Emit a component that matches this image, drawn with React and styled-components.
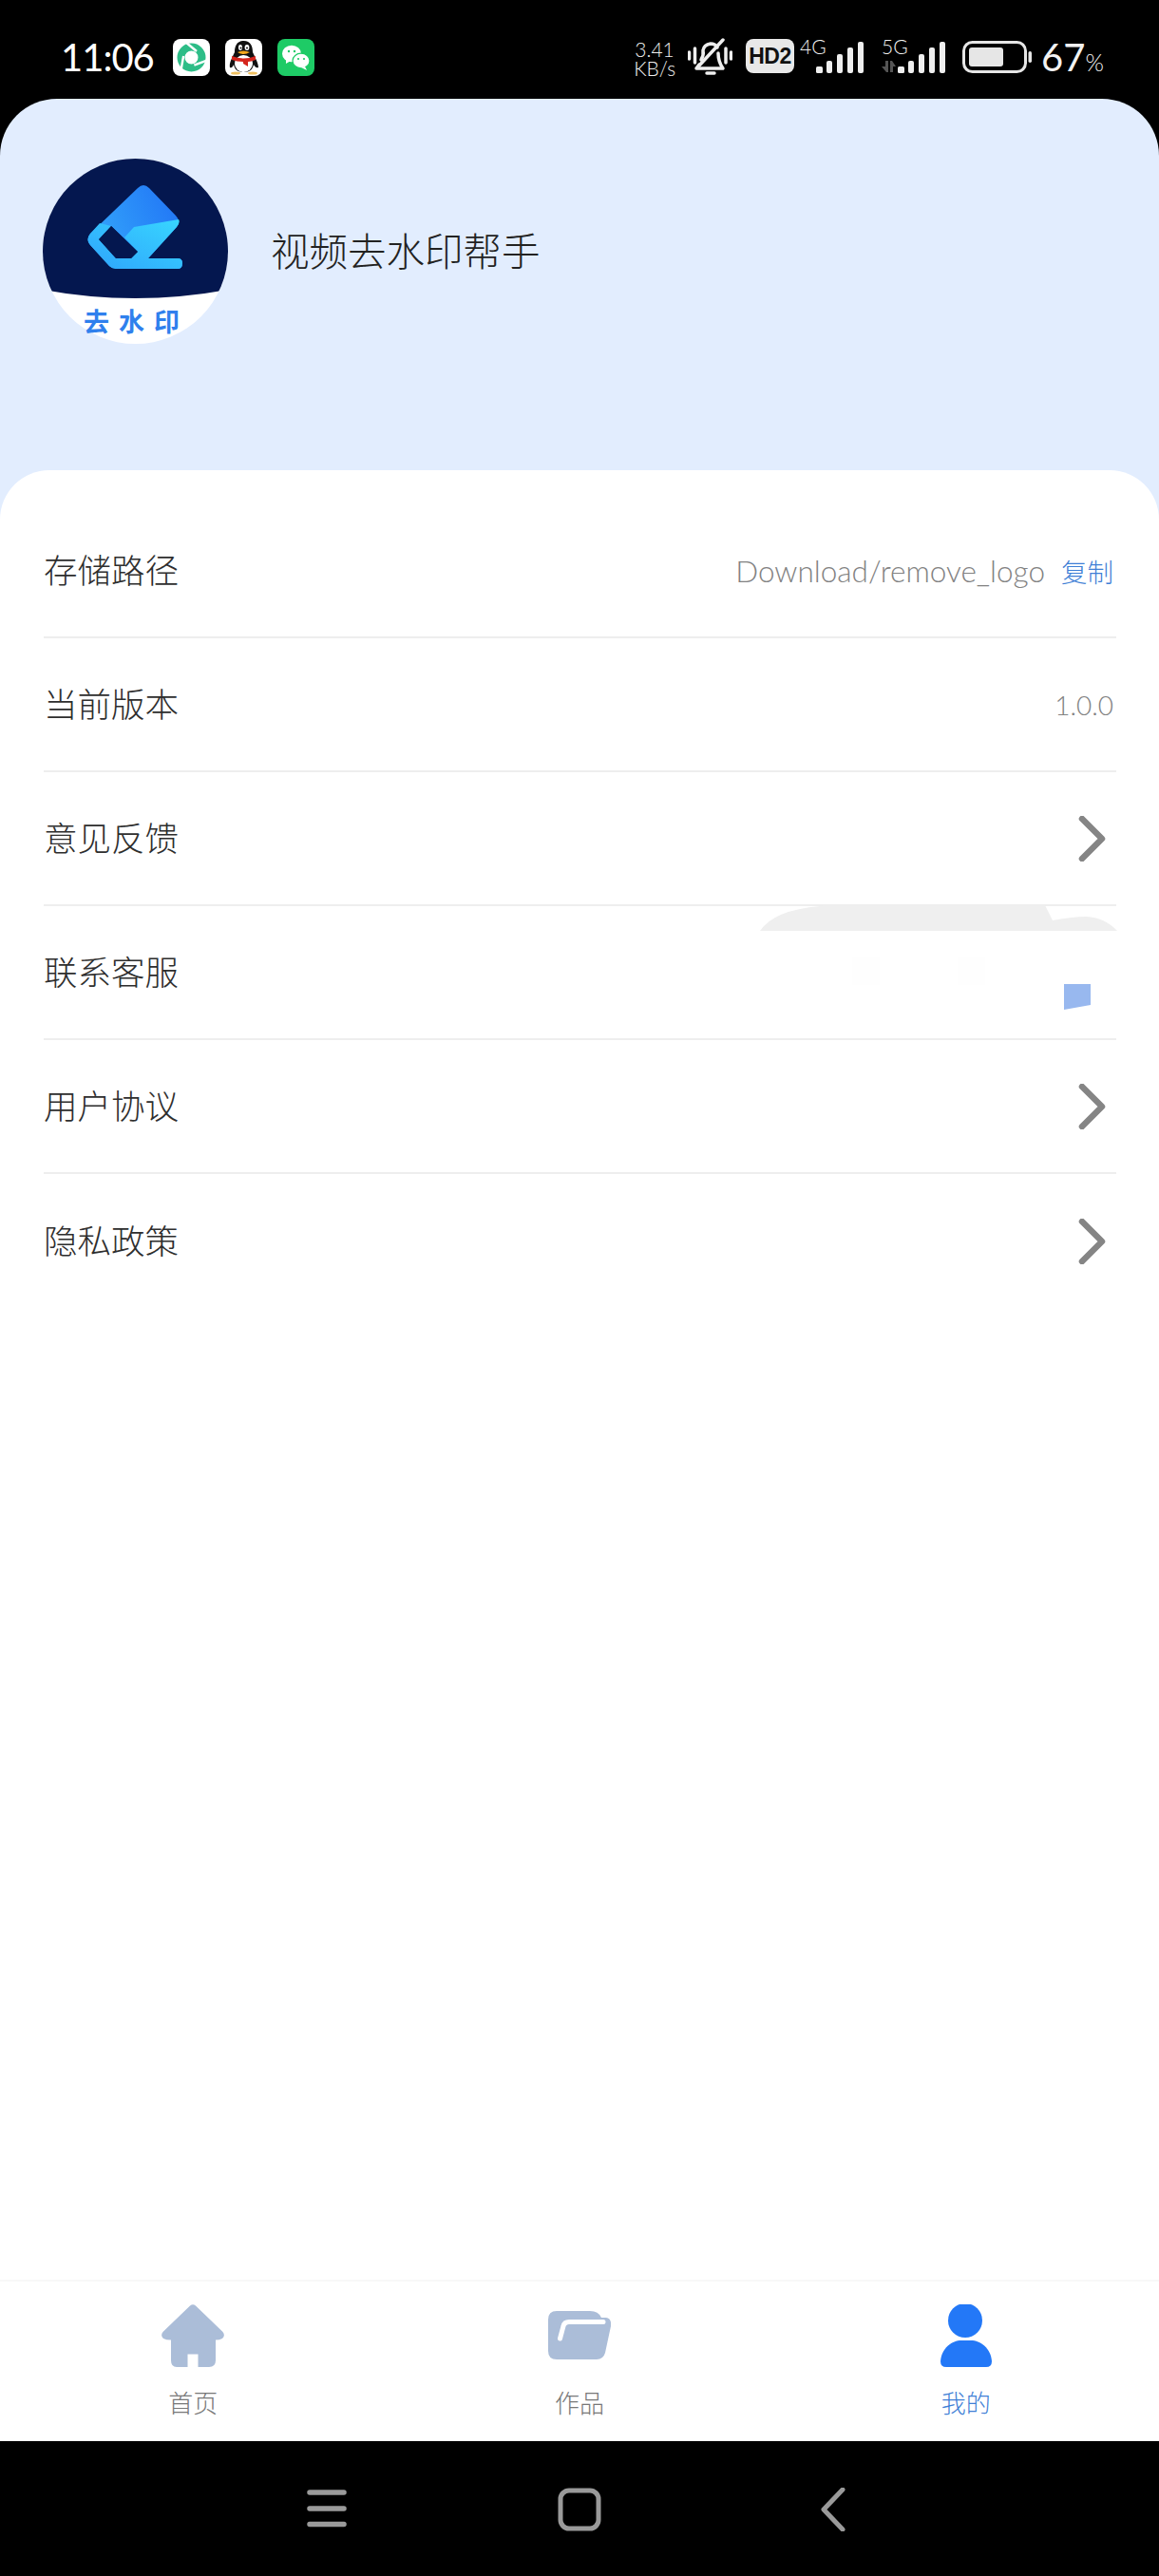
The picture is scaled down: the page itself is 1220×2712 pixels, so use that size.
import React from 'react'
import styled, { createGlobalStyle } from 'styled-components'

const GlobalStyle = createGlobalStyle`
  html, body {
    margin: 0;
    padding: 0;
    background: #000;
  }
  * {
    box-sizing: border-box;
  }
`

const CJK = `"Noto Sans CJK SC", "Noto Sans", sans-serif`
const LATIN = `Lato, "Noto Sans CJK SC", sans-serif`

const Page = styled.div`
  width: 1220px;
  height: 2712px;
  display: flex;
  flex-direction: column;
  background: #000;
  font-family: ${CJK};
  overflow: hidden;
`

const StatusBar = styled.div`
  height: 104px;
  flex: none;
  display: flex;
  justify-content: space-between;
  align-items: flex-start;
  padding: 40px 58px 0 64px;
  color: #f2f2f2;
`

const StatusLeft = styled.div`
  display: flex;
  align-items: center;
  height: 40px;
`

const StatusRight = styled.div`
  display: flex;
  align-items: flex-start;
  height: 40px;
`

const Time = styled.span`
  font-family: ${LATIN};
  font-weight: 400;
  font-size: 40px;
  line-height: 40px;
  letter-spacing: -1px;
  width: 118px;
  color: #fff;
`

const AppIcon = styled.svg`
  width: 39px;
  height: 39px;
  margin-right: 16px;
  flex: none;
`

const Speed = styled.div`
  font-family: ${LATIN};
  font-weight: 300;
  font-size: 21px;
  line-height: 20px;
  width: 44px;
  margin-top: 2px;
  text-align: center;
  color: #f0f0f0;
`

const StatusIcon = styled.svg`
  flex: none;
  display: block;
  margin-left: ${p => p.$gap}px;
`

const SignalIcon = styled(StatusIcon)`
  margin-top: -6px;
`

const Percent = styled.div`
  font-family: ${LATIN};
  font-weight: 400;
  font-size: 40px;
  line-height: 40px;
  margin-left: 10px;
  color: #f2f2f2;
  small {
    font-size: 25px;
    font-weight: 300;
  }
`

const Body = styled.div`
  flex: 1;
  display: flex;
  flex-direction: column;
  background: #e2edfe;
  border-radius: 60px 60px 0 0;
`

const Hero = styled.div`
  height: 391px;
  flex: none;
  display: flex;
  align-items: flex-start;
  padding: 63px 0 0 45px;
`

const Avatar = styled.svg`
  width: 195px;
  height: 195px;
  flex: none;
`

const AppName = styled.div`
  margin-left: 45px;
  height: 195px;
  padding-bottom: 4px;
  display: flex;
  align-items: center;
  font-size: 40.5px;
  font-weight: 300;
  color: #222;
`

const Sheet = styled.div`
  flex: 1;
  background: #fff;
  border-radius: 52px 52px 0 0;
  padding: 36px 45px 0 46px;
`

const Row = styled.div`
  position: relative;
  height: 141px;
  display: flex;
  align-items: center;
  justify-content: space-between;
  border-bottom: ${p => (p.$last ? 'none' : '2px solid #eeeeee')};
`

const Label = styled.span`
  margin-bottom: 4px;
  font-size: 35.5px;
  font-weight: 300;
  color: #2e2e2e;
`

const RowRight = styled.div`
  display: flex;
  align-items: center;
  padding-right: 3px;
`

const Value = styled.span`
  font-family: ${LATIN};
  font-weight: 300;
  font-size: ${p => p.$size}px;
  color: #828282;
`

const Copy = styled.span`
  margin-left: 17px;
  font-size: 27.5px;
  font-weight: 300;
  color: #3f7fd6;
`

const Chevron = styled.svg`
  width: 30px;
  height: 48px;
  margin-right: 8px;
  flex: none;
`

const Glitch = styled.svg`
  position: absolute;
  left: 0;
  top: -2px;
  width: 1130px;
  height: 142px;
`

const TabBar = styled.div`
  height: 170px;
  flex: none;
  display: grid;
  grid-template-columns: repeat(3, 1fr);
  background: #fff;
  border-top: 2px solid #f8f8f8;
`

const Tab = styled.div`
  display: flex;
  flex-direction: column;
  align-items: center;
  padding-top: 24px;
`

const TabIcon = styled.svg`
  width: 66px;
  height: 66px;
  display: block;
`

const TabLabel = styled.span`
  margin-top: 22px;
  font-size: 26px;
  line-height: 30px;
  font-weight: 300;
  color: ${p => (p.$active ? '#3f7fd6' : '#787878')};
`

const NavBar = styled.div`
  height: 142px;
  flex: none;
  display: grid;
  grid-template-columns: repeat(3, 1fr);
  background: #000;
`

const NavSlot = styled.div`
  display: flex;
  align-items: flex-start;
  padding-top: 49px;
  justify-content: ${p => p.$align};
  padding-left: ${p => p.$left || 0}px;
`

const NavIcon = styled.svg`
  width: 46px;
  height: 46px;
  display: block;
`

const rows = [
  { label: '存储路径', value: 'Download/remove_logo', size: 31.5, copy: true },
  { label: '当前版本', value: '1.0.0', size: 28 },
  { label: '意见反馈', arrow: true },
  { label: '联系客服', glitch: true },
  { label: '用户协议', arrow: true },
  { label: '隐私政策', arrow: true, last: true },
]

const SwirlApp = () => (
  <AppIcon viewBox="0 0 39 39">
    <rect width="39" height="39" rx="8" fill="#fff" />
    <circle cx="19.5" cy="19.5" r="11" fill="none" stroke="#2dbd87" strokeWidth="8" />
    <g fill="none" stroke="#fff" strokeWidth="2.4">
      <path d="M13 3 L25 13" />
      <path d="M13 3 L25 13" transform="rotate(120 19.5 19.5)" />
      <path d="M13 3 L25 13" transform="rotate(240 19.5 19.5)" />
    </g>
  </AppIcon>
)

const QQApp = () => (
  <AppIcon viewBox="0 0 39 39">
    <rect width="39" height="39" rx="8" fill="#fff" />
    <ellipse cx="29" cy="36" rx="5" ry="1.6" fill="#f0c060" />
    <ellipse cx="11" cy="36" rx="5" ry="1.6" fill="#f0c060" />
    <path d="M19.5 2 C12 2 10 8 10 14 C7 20 4 26 5 30 C7 31 8 29 9 27 C10 32 13 35 19.5 35 C26 35 29 32 30 27 C31 29 33 31 35 30 C35 26 32 20 29 14 C29 8 27 2 19.5 2Z" fill="#111" />
    <ellipse cx="19.5" cy="26" rx="9.5" ry="9" fill="#fff" />
    <ellipse cx="16" cy="9" rx="2" ry="3" fill="#fff" />
    <ellipse cx="23" cy="9" rx="2.4" ry="3" fill="#fff" />
    <circle cx="16.5" cy="9.5" r="1" fill="#111" />
    <circle cx="23" cy="9.5" r="1" fill="#111" />
    <path d="M13 14 Q19.5 11 26 14 Q19.5 18 13 14Z" fill="#f4a81c" />
    <path d="M7 18 Q19 23 32 18 L32 22 Q27 24 24 24 L24 29 L19 26 L19 24 Q12 24 7 22Z" fill="#d5251d" />
  </AppIcon>
)

const WechatApp = () => (
  <AppIcon viewBox="0 0 39 39">
    <rect width="39" height="39" rx="8" fill="#1ecb66" />
    <ellipse cx="15" cy="15.5" rx="10" ry="8.8" fill="#fff" />
    <path d="M9 21 L9 26 L14 23Z" fill="#fff" />
    <ellipse cx="25" cy="23" rx="9" ry="7.8" fill="#fff" stroke="#1ecb66" strokeWidth="1.2" />
    <path d="M29 29 L31 33 L25 30Z" fill="#fff" />
    <circle cx="12" cy="13" r="1.2" fill="#1ecb66" />
    <circle cx="18" cy="13" r="1.2" fill="#1ecb66" />
    <circle cx="22" cy="21" r="1.1" fill="#1ecb66" />
    <circle cx="28" cy="21" r="1.1" fill="#1ecb66" />
  </AppIcon>
)

const Signal = ({ label, arrows, gap }) => (
  <SignalIcon $gap={gap} width="72" height="46" viewBox="0 -6 72 46">
    <text x="0" y="17" fontFamily="Lato, sans-serif" fontWeight="300" fontSize="21" fill="#f0f0f0">{label}</text>
    {arrows && (
      <g fill="#555">
        <path d="M0 30 H4 V24 H7 V36 H5 Z" />
        <path d="M9 24 H11 L15 30 H12 V36 H9 Z" />
      </g>
    )}
    <g fill="#eeeeee">
      <rect x="17" y="30" width="7" height="7" rx="1.5" />
      <rect x="28" y="24" width="6" height="13" rx="2" />
      <rect x="39" y="17" width="6" height="20" rx="2" />
      <rect x="50" y="10" width="6" height="27" rx="2" />
      <rect x="61" y="4" width="6" height="33" rx="2" />
    </g>
  </SignalIcon>
)

const Logo = () => (
  <Avatar viewBox="0 0 195 195">
    <defs>
      <clipPath id="logoClip">
        <circle cx="97.5" cy="97.5" r="97.5" />
      </clipPath>
      <linearGradient id="eraserTop" x1="1" y1="0.35" x2="0" y2="0.75">
        <stop offset="0" stopColor="#2277f6" />
        <stop offset="1" stopColor="#35a9fb" />
      </linearGradient>
      <linearGradient id="eraserBottom" x1="1" y1="0" x2="0" y2="1">
        <stop offset="0" stopColor="#38d6ff" />
        <stop offset="1" stopColor="#2fa4fc" />
      </linearGradient>
    </defs>
    <g clipPath="url(#logoClip)">
      <rect width="195" height="195" fill="#fff" />
      <path d="M0 0 H195 V138 Q97 156 0 138Z" fill="#04174f" />
    </g>
    <path
      d="M100 31 Q106 25 112 31 L140 60 Q146 66 141 72 L111 105 H142 Q147 105 147 110 Q147 116 142 116 H77 Q73 116 70 113 L50 91 Q45 85 50 79Z M72 71 L59 85 L77 105 H93 L100 98Z"
      fill="url(#eraserTop)"
      fillRule="evenodd"
    />
    <path
      d="M96 72 L143 64 Q145 67 141 72 L111 105 H142 Q147 105 147 110 Q147 116 142 116 H77 Q73 116 70 113 L50 91 Q45 85 50 79 L60 68 L72 71 L59 85 L77 105 H93 L100 98 L86 83Z"
      fill="url(#eraserBottom)"
      fillRule="nonzero"
    />
    <path d="M72 71 L59 85 L77 105 H93 L100 98Z" fill="#04174f" />
    <text x="43" y="182" fontFamily='"Noto Sans CJK SC", sans-serif' fontWeight="700" fontSize="27" letterSpacing="10" fill="#2f80ed">去水印</text>
  </Avatar>
)

const HomeIcon = () => (
  <TabIcon viewBox="0 0 66 66">
    <path
      d="M30 1.5 Q33 -1 36 1.5 L64.5 29 Q67.5 33 64 36 Q61 37.5 57 37.5 V59 Q57 66 50 66 H38.5 V52.5 H27.5 V66 H16 Q10 66 10 59 V37.5 Q5 37.5 2 36 Q-1.5 33 1.5 29Z"
      fill="#abbdd8"
    />
  </TabIcon>
)

const FolderIcon = () => (
  <TabIcon viewBox="0 0 66 66">
    <path
      d="M9 7 H44 Q53 7 56 14 H61 Q67 15 66 23 L60 51 Q58 58 51 58 H9 Q0 58 0 49 V16 Q0 7 9 7Z"
      fill="#abbdd8"
    />
    <path d="M12.5 36 L16 23 Q17 18.5 22 18.5 H58" fill="none" stroke="#fff" strokeWidth="5" strokeLinecap="round" />
  </TabIcon>
)

const PersonIcon = () => (
  <TabIcon viewBox="0 0 66 66">
    <circle cx="32" cy="17" r="18" fill="#2378f7" />
    <path d="M6 60 C7 46 18 38 28 38 H38 C48 38 59 46 60 60 Q60 66 54 66 H12 Q6 66 6 60Z" fill="#2378f7" />
  </TabIcon>
)

const App = () => {
  return (
    <Page>
      <GlobalStyle />
      <StatusBar>
        <StatusLeft>
          <Time>11:06</Time>
          <SwirlApp />
          <QQApp />
          <WechatApp />
        </StatusLeft>
        <StatusRight>
          <Speed>3.41<br />KB/s</Speed>
          <StatusIcon $gap={13} width="47" height="40" viewBox="0 0 47 40">
            <g fill="none" stroke="#eee" strokeWidth="3.5" strokeLinecap="round" strokeLinejoin="round">
              <path d="M1.5 15 V22 M7.5 11 V26 M40 11 V26 M45.5 15 V22" />
              <path d="M14 23 Q17 18 16 13 Q17 7 24 6 Q29 6 31 10 M32 16 Q32 25 37 32 H9 L12 28" />
              <path d="M37 2 L12 29" />
              <path d="M20 37 H28" />
            </g>
          </StatusIcon>
          <StatusIcon $gap={14} width="51" height="37" viewBox="0 0 51 37">
            <rect y="1" width="51" height="36" rx="8" fill="#e8e8e8" />
            <text x="25.5" y="27" textAnchor="middle" fontFamily='"Liberation Sans", sans-serif' fontWeight="700" fontSize="23" letterSpacing="-0.5" fill="#111">HD2</text>
          </StatusIcon>
          <Signal label="4G" gap={6} />
          <Signal label="5G" arrows gap={14} />
          <StatusIcon $gap={13} width="73" height="40" viewBox="0 0 73 40">
            <rect x="1.5" y="4.5" width="65" height="31" rx="9" fill="none" stroke="#e6e6e6" strokeWidth="3" />
            <rect x="7" y="10" width="36" height="20" rx="3" fill="#e6e6e6" />
            <rect x="69.5" y="14" width="3.5" height="12" rx="1.7" fill="#e6e6e6" />
          </StatusIcon>
          <Percent>67<small>%</small></Percent>
        </StatusRight>
      </StatusBar>
      <Body>
        <Hero>
          <Logo />
          <AppName>视频去水印帮手</AppName>
        </Hero>
        <Sheet>
          {rows.map(row => (
            <Row key={row.label} $last={row.last}>
              {row.glitch && (
                <Glitch viewBox="46 952 1130 142">
                  <path d="M800 980 Q815 958 863 954 L870 953 H1100 L1108 969 Q1130 965 1143 965 Q1163 966 1176 980Z" fill="#efefef" />
                  <rect x="897" y="1008" width="29" height="29" fill="#fefefe" />
                  <rect x="1008" y="1008" width="29" height="29" fill="#fefefe" />
                  <path d="M1120 1036 H1148 V1058 L1120 1063Z" fill="#98b8ef" />
                </Glitch>
              )}
              <Label>{row.label}</Label>
              <RowRight>
                {row.value && <Value $size={row.size}>{row.value}</Value>}
                {row.copy && <Copy>复制</Copy>}
                {row.arrow && (
                  <Chevron viewBox="0 0 30 48">
                    <path d="M5 3 L26 24 L5 45" fill="none" stroke="#858585" strokeWidth="6.5" strokeLinecap="round" strokeLinejoin="round" />
                  </Chevron>
                )}
              </RowRight>
            </Row>
          ))}
        </Sheet>
        <TabBar>
          <Tab>
            <HomeIcon />
            <TabLabel>首页</TabLabel>
          </Tab>
          <Tab>
            <FolderIcon />
            <TabLabel>作品</TabLabel>
          </Tab>
          <Tab>
            <PersonIcon />
            <TabLabel $active>我的</TabLabel>
          </Tab>
        </TabBar>
      </Body>
      <NavBar>
        <NavSlot $align="flex-start" $left={321}>
          <NavIcon viewBox="0 0 46 46">
            <path d="M5 5 H41 M5 22 H41 M5 38.5 H41" stroke="#9a9a9a" strokeWidth="5.5" strokeLinecap="round" />
          </NavIcon>
        </NavSlot>
        <NavSlot $align="center">
          <NavIcon viewBox="0 0 46 46">
            <rect x="3" y="3" width="40" height="40" rx="9" fill="none" stroke="#9a9a9a" strokeWidth="5" />
          </NavIcon>
        </NavSlot>
        <NavSlot $align="flex-start" $left={47}>
          <NavIcon viewBox="0 0 46 46">
            <path d="M27 2 L7 23 L27 44" fill="none" stroke="#9a9a9a" strokeWidth="5" strokeLinecap="round" strokeLinejoin="round" />
          </NavIcon>
        </NavSlot>
      </NavBar>
    </Page>
  )
}

export default App
